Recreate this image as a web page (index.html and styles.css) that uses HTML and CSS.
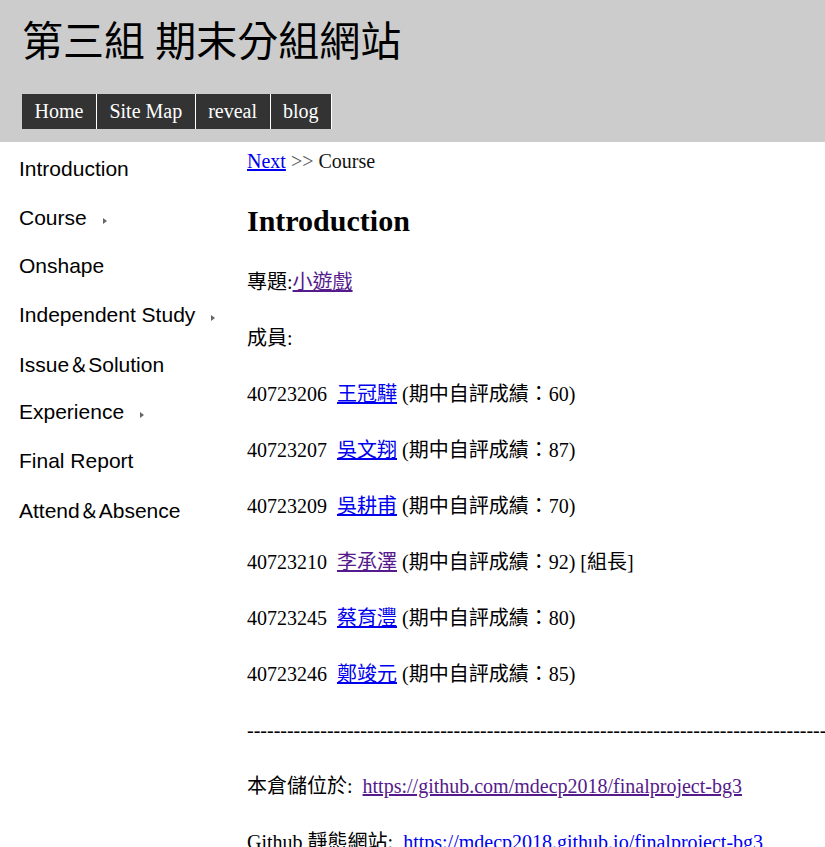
FILE: index.html
```html
<!DOCTYPE html>
<html lang="zh-Hant">
<head>
<meta charset="utf-8">
<title>第三組 期末分組網站</title>
<link rel="stylesheet" href="styles.css">
</head>
<body>
<header class="header">
  <div class="site-title">第三組 期末分組網站</div>
  <nav class="topnav">
    <a class="topnav-item" href="#">Home</a><a class="topnav-item" href="#">Site Map</a><a class="topnav-item" href="#">reveal</a><a class="topnav-item" href="#">blog</a>
  </nav>
</header>
<div class="layout">
  <aside class="sidebar">
    <ul class="menu">
      <li class="menu-item">Introduction</li>
      <li class="menu-item">Course<span class="caret"></span></li>
      <li class="menu-item">Onshape</li>
      <li class="menu-item">Independent Study<span class="caret"></span></li>
      <li class="menu-item">Issue<span class="amp">＆</span>Solution</li>
      <li class="menu-item">Experience<span class="caret"></span></li>
      <li class="menu-item">Final Report</li>
      <li class="menu-item">Attend<span class="amp">＆</span>Absence</li>
    </ul>
  </aside>
  <main class="content">
    <div class="crumb"><a class="link" href="#">Next</a> <span class="crumb-sep">&gt;&gt;</span> Course</div>
    <h1 class="page-title">Introduction</h1>
    <p class="para">專題:<a class="link visited" href="#">小遊戲</a></p>
    <p class="para">成員:</p>
    <p class="para">40723206&nbsp; <a class="link" href="#">王冠驊</a> (期中自評成績：60)</p>
    <p class="para">40723207&nbsp; <a class="link" href="#">吳文翔</a> (期中自評成績：87)</p>
    <p class="para">40723209&nbsp; <a class="link" href="#">吳耕甫</a> (期中自評成績：70)</p>
    <p class="para">40723210&nbsp; <a class="link visited" href="#">李承澤</a> (期中自評成績：92) [組長]</p>
    <p class="para">40723245&nbsp; <a class="link" href="#">蔡育灃</a> (期中自評成績：80)</p>
    <p class="para">40723246&nbsp; <a class="link" href="#">鄭竣元</a> (期中自評成績：85)</p>
    <p class="para dashes">----------------------------------------------------------------------------------------------------------------------------------------</p>
    <p class="para">本倉儲位於:&nbsp; <a class="link visited" href="#">https://github.com/mdecp2018/finalproject-bg3</a></p>
    <p class="para">Github 靜態網站:&nbsp; <a class="link" href="#">https://mdecp2018.github.io/finalproject-bg3</a></p>
  </main>
</div>
</body>
</html>
```
FILE: styles.css
```css
html {
  overflow-x: hidden;
}
body {
  margin: 0;
  font-family: "Liberation Serif", "Noto Sans CJK TC", serif;
  color: #000;
  background: #fff;
}
.header {
  background: #cccccc;
  height: 142px;
  padding: 0 0 0 22px;
  box-sizing: border-box;
}
.site-title {
  font-size: 41px;
  line-height: 41px;
  padding-top: 22px;
  height: 74px;
  box-sizing: border-box;
  font-family: "Liberation Serif", "Noto Sans CJK TC", serif;
  font-weight: 400;
}
.topnav {
  display: flex;
  margin-top: 20px;
}
.topnav-item {
  display: block;
  background: #333333;
  color: #fff;
  text-decoration: none;
  font-size: 20px;
  line-height: 35px;
  height: 35px;
  padding: 0 12.5px;
  border-right: 1px solid #fff;
}
.layout {
  display: flex;
  align-items: flex-start;
}
.sidebar {
  width: 247px;
  flex: none;
  padding-left: 19px;
  padding-top: 3px;
  box-sizing: border-box;
}
.menu {
  list-style: none;
  margin: 0;
  padding: 0;
}
.menu-item {
  font-family: "Liberation Sans", "Noto Sans CJK TC", sans-serif;
  font-size: 21px;
  line-height: 48.7px;
  height: 48.7px;
  color: #000;
  white-space: nowrap;
}
.amp {
  font-family: "Noto Sans CJK TC", sans-serif;
  font-size: 19px;
}
.caret {
  display: inline-block;
  width: 0;
  height: 0;
  border-left: 4px solid #666;
  border-top: 3px solid transparent;
  border-bottom: 3px solid transparent;
  margin-left: 16px;
  vertical-align: 1px;
}
.content {
  flex: 1;
  min-width: 0;
  padding-top: 1px;
  font-size: 20px;
}
.crumb {
  line-height: 36px;
  color: #111;
}
.crumb-sep {
  color: #555;
}
.page-title {
  font-size: 30px;
  line-height: 36px;
  margin: 24px 0 25px;
  font-weight: bold;
}
.para {
  margin: 20px 0;
  line-height: 36px;
  white-space: nowrap;
}
.link {
  color: #0000ee;
  text-decoration: underline;
}
.link.visited {
  color: #551a8b;
}
.dashes {
  overflow: visible;
}
```
